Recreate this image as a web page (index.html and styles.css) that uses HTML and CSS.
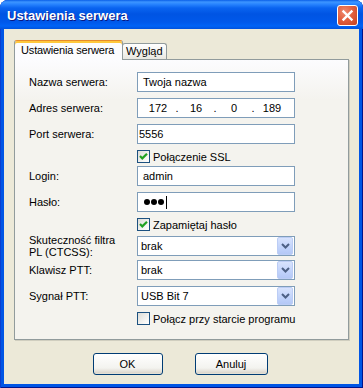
FILE: index.html
```html
<!DOCTYPE html>
<html lang="pl">
<head>
    <meta charset="UTF-8">
    <title>Ustawienia serwera</title>
    <link rel="stylesheet" href="styles.css">
</head>
<body>
    <div class="window">
        <div class="titlebar">
            <span class="title">Ustawienia serwera</span>
            <button class="close-btn" aria-label="Zamknij">
                <svg width="13" height="13" viewBox="0 0 13 13">
                    <path d="M2.5 2.5 L10.5 10.5 M10.5 2.5 L2.5 10.5" stroke="#fff" stroke-width="2.4" stroke-linecap="square"/>
                </svg>
            </button>
        </div>
        <div class="client">
            <div class="tabs">
                <div class="tab active">Ustawienia serwera</div>
                <div class="tab">Wygląd</div>
            </div>
            <div class="panel">
                <div class="row">
                    <label>Nazwa serwera:</label>
                    <div class="field">Twoja nazwa</div>
                </div>
                <div class="row">
                    <label>Adres serwera:</label>
                    <div class="field ip">
                        <span class="octet">172</span><span class="dot">.</span>
                        <span class="octet">16</span><span class="dot">.</span>
                        <span class="octet">0</span><span class="dot">.</span>
                        <span class="octet">189</span>
                    </div>
                </div>
                <div class="row">
                    <label>Port serwera:</label>
                    <div class="field tight">5556</div>
                </div>
                <div class="check-row">
                    <span class="checkbox checked">
                        <svg width="11" height="11" viewBox="0 0 11 11"><path d="M2 5 L4.3 7.4 L9 2.7" fill="none" stroke="#21a121" stroke-width="2.2"/></svg>
                    </span>
                    <span>Połączenie SSL</span>
                </div>
                <div class="row">
                    <label>Login:</label>
                    <div class="field">admin</div>
                </div>
                <div class="row">
                    <label>Hasło:</label>
                    <div class="field password">
                        <i></i><i></i><i></i><span class="caret"></span>
                    </div>
                </div>
                <div class="check-row">
                    <span class="checkbox checked">
                        <svg width="11" height="11" viewBox="0 0 11 11"><path d="M2 5 L4.3 7.4 L9 2.7" fill="none" stroke="#21a121" stroke-width="2.2"/></svg>
                    </span>
                    <span>Zapamiętaj hasło</span>
                </div>
                <div class="row">
                    <label class="two-line">Skuteczność filtra<br>PL (CTCSS):</label>
                    <div class="combo">
                        <span>brak</span>
                        <span class="drop"><svg width="9" height="6" viewBox="0 0 9 6"><path d="M1 1 L4.5 4.5 L8 1" fill="none" stroke="#4d6185" stroke-width="2"/></svg></span>
                    </div>
                </div>
                <div class="row">
                    <label>Klawisz PTT:</label>
                    <div class="combo">
                        <span>brak</span>
                        <span class="drop"><svg width="9" height="6" viewBox="0 0 9 6"><path d="M1 1 L4.5 4.5 L8 1" fill="none" stroke="#4d6185" stroke-width="2"/></svg></span>
                    </div>
                </div>
                <div class="row">
                    <label>Sygnał PTT:</label>
                    <div class="combo">
                        <span>USB Bit 7</span>
                        <span class="drop"><svg width="9" height="6" viewBox="0 0 9 6"><path d="M1 1 L4.5 4.5 L8 1" fill="none" stroke="#4d6185" stroke-width="2"/></svg></span>
                    </div>
                </div>
                <div class="check-row last">
                    <span class="checkbox"></span>
                    <span>Połącz przy starcie programu</span>
                </div>
            </div>
            <div class="buttons">
                <button class="btn ok">OK</button>
                <button class="btn cancel">Anuluj</button>
            </div>
        </div>
    </div>
</body>
</html>
```

FILE: styles.css
```css
body {
    margin: 0;
    background: #fff;
    font-family: "Liberation Sans", Arial, sans-serif;
    font-size: 11px;
    color: #000;
}
.window {
    width: 363px;
    height: 388px;
    box-sizing: border-box;
    padding: 0 4px 4px 4px;
    background: #0055e5;
    border-radius: 8px 8px 0 0;
    box-shadow: inset 1px 0 0 #0a3ed0, inset -1px 0 0 #00138c, inset 0 -1px 0 #00138c;
}
.titlebar {
    height: 29px;
    margin: 0 -4px;
    padding: 5px 5px 0 7px;
    box-sizing: border-box;
    display: flex;
    align-items: flex-start;
    border-radius: 8px 8px 0 0;
    background: linear-gradient(to bottom, #0a5fe8 0px, #3d95ff 2px, #2a86ff 4px, #0a64f0 8px, #0054e3 14px, #0058ea 22px, #0063f6 26px, #0052dd 29px);
}
.title {
    color: #fff;
    font-weight: bold;
    font-size: 13px;
    line-height: 21px;
    text-shadow: 1px 1px 0 #0a1883;
}
.close-btn {
    margin-left: auto;
    width: 21px;
    height: 21px;
    padding: 0;
    border: 1px solid #fff;
    border-radius: 3px;
    background: radial-gradient(circle at 35% 30%, #ef8a70 0%, #e2603f 45%, #c4401f 100%);
    display: flex;
    align-items: center;
    justify-content: center;
}
.client {
    height: 355px;
    background: #ece9d8;
    padding: 11px 10px 0 10px;
    box-sizing: border-box;
}
.tabs {
    display: flex;
    align-items: flex-end;
    height: 19px;
}
.tab {
    height: 16px;
    width: 45px;
    margin-left: -1px;
    box-sizing: border-box;
    padding: 0 3px;
    line-height: 15px;
    white-space: nowrap;
    border: 1px solid #919b9c;
    border-bottom: none;
    border-radius: 3px 3px 0 0;
    background: linear-gradient(#ffffff, #f3f3ef 60%, #e8e7e0);
}
.tab.active {
    position: relative;
    z-index: 1;
    width: 109px;
    height: 20px;
    margin-left: 0;
    margin-bottom: -1px;
    padding: 0 0 0 6px;
    line-height: 19px;
    letter-spacing: -0.15px;
    background: #fcfcfe;
    border-top-color: #e68b2c;
    box-shadow: inset 0 2px 0 #ffc83c;
}
.panel {
    height: 281px;
    box-sizing: border-box;
    border: 1px solid #919b9c;
    background: linear-gradient(#fcfcfe, #f4f3ee 40px);
    box-shadow: 1px 1px 0 #d0cebf;
    padding: 12px 0 0 14px;
}
.row {
    display: grid;
    grid-template-columns: 108px 158px;
    align-items: center;
    height: 20px;
    margin-bottom: 6px;
}
.row label {
    line-height: 13px;
}
.row label.two-line {
    line-height: 12px;
}
.field, .combo {
    height: 20px;
    box-sizing: border-box;
    border: 1px solid #7f9db9;
    background: #fff;
    padding-left: 5px;
    line-height: 18px;
}
.field.tight {
    padding-left: 1px;
}
.ip {
    display: flex;
    padding-left: 5px;
}
.ip .octet {
    width: 30px;
    text-align: center;
}
.ip .dot {
    width: 8px;
    text-align: center;
}
.password {
    display: flex;
    align-items: center;
    gap: 1px;
    padding-left: 6px;
}
.password i {
    width: 6px;
    height: 6px;
    border-radius: 50%;
    background: #000;
}
.password .caret {
    width: 1px;
    height: 13px;
    margin-left: 1px;
    background: #000;
}
.combo {
    display: flex;
    align-items: center;
    padding-left: 3px;
}
.drop {
    margin-left: auto;
    margin-right: 1px;
    width: 16px;
    height: 18px;
    box-sizing: border-box;
    border: 1px solid #bccdf5;
    border-radius: 2px;
    background: linear-gradient(#d8e3fd, #c1d3fb 60%, #b4c8f6);
    display: flex;
    align-items: center;
    justify-content: center;
}
.check-row {
    display: flex;
    align-items: center;
    gap: 3px;
    height: 13px;
    margin-left: 108px;
    margin-bottom: 3px;
}
.checkbox {
    width: 13px;
    height: 13px;
    box-sizing: border-box;
    border: 1px solid #1c5180;
    background: linear-gradient(135deg, #dcdcd7, #f6f6f4 70%, #ffffff);
    display: flex;
    align-items: center;
    justify-content: center;
}
.buttons {
    display: flex;
    justify-content: center;
    gap: 32px;
    margin-top: 13px;
    padding-right: 3px;
}
.btn {
    height: 22px;
    padding: 0;
    font-family: inherit;
    font-size: 11px;
    color: #000;
    border: 1px solid #003c74;
    border-radius: 3px;
    background: linear-gradient(#ffffff, #f3f3ef 70%, #d6d0c5);
    box-shadow: inset 0 -1px 0 #e3e0d5;
}
.btn.ok {
    width: 70px;
}
.btn.cancel {
    width: 73px;
}
```
